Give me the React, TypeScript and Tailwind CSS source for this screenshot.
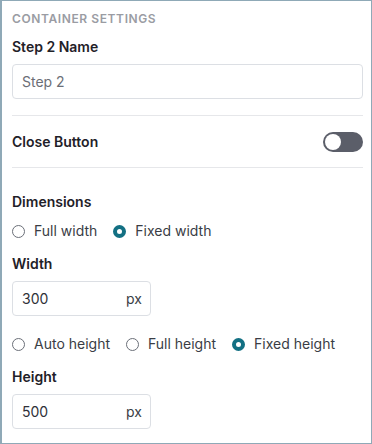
import React from 'react';

const Radio = ({ label, checked = false }: { label: string; checked?: boolean }) => (
  <label className="flex items-center gap-[9px]">
    {checked ? (
      <span className="w-[13px] h-[13px] rounded-full border-[4px] border-[#137083] bg-white" />
    ) : (
      <span className="w-[13px] h-[13px] rounded-full border border-[#6b6f78] bg-white" />
    )}
    <span className="text-sm text-[#3a3d45]">{label}</span>
  </label>
);

const PxInput = ({ value }: { value: string }) => (
  <div className="mt-[7px] w-[139px] h-[35px] border border-[#dcdfe4] rounded-[4px] flex items-center justify-between pl-[9px] pr-[8px]">
    <span className="text-sm text-[#2f3138]">{value}</span>
    <span className="text-sm text-[#3a3d45]">px</span>
  </div>
);

export default function App() {
  return (
    <div
      className="w-[372px] h-[444px] border border-l-2 border-[#8fa9b7] bg-white pl-[10px] pr-[8px] pt-[10px]"
      style={{ fontFamily: 'Inter, "Noto Sans", sans-serif' }}
    >
      <div className="text-xs leading-4 font-semibold tracking-wider uppercase text-[#9a9ca3]">
        Container Settings
      </div>

      <div className="mt-[10px] text-sm leading-5 font-semibold text-[#1f2128]">Step 2 Name</div>
      <div className="mt-[7px] h-[35px] border border-[#dcdfe4] rounded-[4px] flex items-center pl-[9px]">
        <span className="text-sm text-[#6b6e76]">Step 2</span>
      </div>

      <div className="mt-[16px] h-px bg-[#e6e7ea]" />

      <div className="mt-[16px] h-5 flex items-center justify-between">
        <span className="text-sm font-semibold text-[#1f2128]">Close Button</span>
        <span className="w-[40px] h-[20px] rounded-full bg-[#5b5e69] flex items-center pl-[2px]">
          <span className="w-4 h-4 rounded-full bg-white" />
        </span>
      </div>

      <div className="mt-[15px] h-px bg-[#e6e7ea]" />

      <div className="mt-[24px] text-sm leading-5 font-semibold text-[#1f2128]">Dimensions</div>
      <div className="mt-[9px] h-5 flex items-center gap-[16px]">
        <Radio label="Full width" />
        <Radio label="Fixed width" checked />
      </div>

      <div className="mt-[13px] text-sm leading-5 font-semibold text-[#1f2128]">Width</div>
      <PxInput value="300" />

      <div className="mt-[18px] h-5 flex items-center gap-[16px]">
        <Radio label="Auto height" />
        <Radio label="Full height" />
        <Radio label="Fixed height" checked />
      </div>

      <div className="mt-[13px] text-sm leading-5 font-semibold text-[#1f2128]">Height</div>
      <PxInput value="500" />
    </div>
  );
}
